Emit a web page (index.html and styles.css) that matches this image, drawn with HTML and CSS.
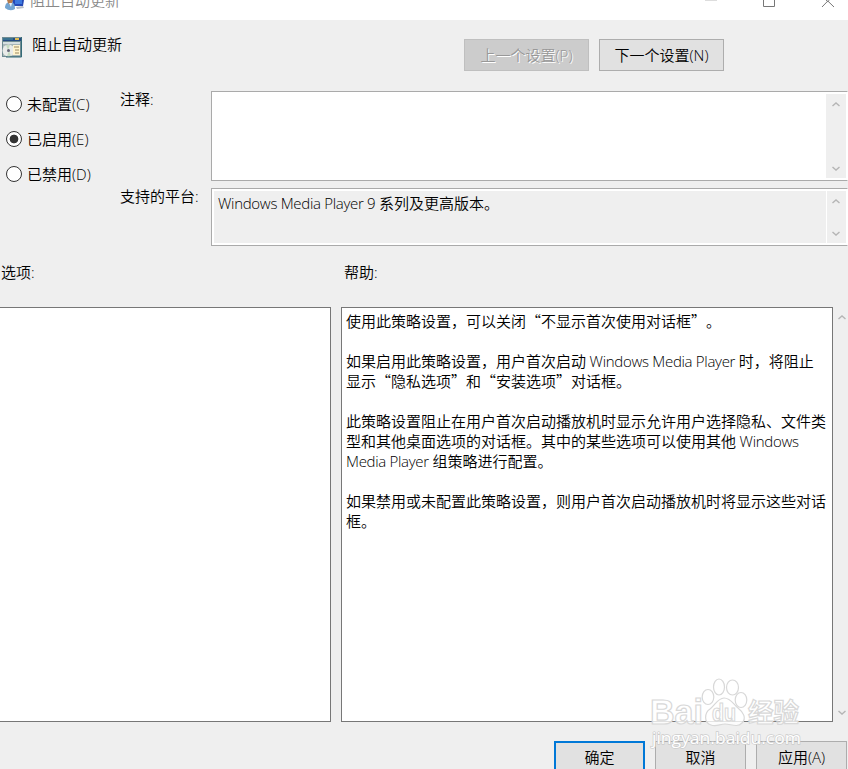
FILE: index.html
```html
<!DOCTYPE html>
<html lang="zh-CN">
<head>
<meta charset="utf-8">
<title>阻止自动更新</title>
<link rel="stylesheet" href="styles.css">
</head>
<body>
<div class="dialog">
  <header class="titlebar">
    <svg class="app-icon" width="22" height="12" viewBox="0 0 22 12">
      <path d="M8 0H20L19 6H9Z" fill="#2549b5"/><path d="M11 0H18V4H11Z" fill="#3c78df"/>
      <path d="M12 7L19 6L20 8L13 9Z" fill="#b8bec8"/>
      <path d="M1 8C1 4 3 2 6 2C10 2 11 5 11 9Q6 12 1 8Z" fill="#73a5d2"/>
      <path d="M3 0H9L8 3L6 5L4 3Z" fill="#b57b4c"/><path d="M5 3L8 3L7 7Z" fill="#e8f3fc"/>
    </svg>
    <span class="title">阻止自动更新</span>
    <svg class="controls" width="140" height="10" viewBox="0 0 140 10" fill="none" stroke="#777">
      <path d="M9 .5H21" stroke="#ddd"/><path d="M67.500 0V6.500H78.500V0"/><path d="M126 7L131.800 1L138 7M130 0L131.800 1.500L133.500 0"/>
    </svg>
  </header>

  <section class="heading">
    <svg class="policy-icon" width="21" height="21" viewBox="0 0 21 21">
      <path d="M0 0H20V20H0Z" fill="#6f8b91"/><path d="M1 1H19V4H1Z" fill="#264b83"/>
      <path d="M1 2H11" stroke="#4e9b9c"/><path d="M13 2H17" stroke="#e0bc54" stroke-width="2"/>
      <path d="M1 5H18V7H1Z" fill="#d6dfe0"/><path d="M1 7H18V19H1Z" fill="#a7b5b7"/>
      <circle cx="6.500" cy="13.500" r="6" fill="#e9ebe9"/><path d="M6 13L4 8L8 8ZM7 14L9 19L5 19Z" fill="#c5dbc2"/>
      <circle cx="6.500" cy="13.500" r="1.500" fill="#667"/>
      <path d="M11 8H18V18H11Z" fill="#fff4cf"/><path d="M12 10H17M13 13H17M13 16H17" stroke="#9b8860"/>
      <path d="M19.500 0V20H4" fill="none" stroke="#356a77"/>
    </svg>
    <h1>阻止自动更新</h1>
    <div class="nav-buttons">
      <button class="button disabled" disabled>上一个设置<span class="latin">(P)</span></button>
      <button class="button">下一个设置<span class="latin">(N)</span></button>
    </div>
  </section>

  <section class="settings">
    <div class="radios">
      <label><i class="radio"></i>未配置<span class="latin">(C)</span></label>
      <label><i class="radio checked"></i>已启用<span class="latin">(E)</span></label>
      <label><i class="radio"></i>已禁用<span class="latin">(D)</span></label>
    </div>
    <div class="field-labels"><div class="comment-label">注释<span class="latin">:</span></div><div>支持的平台<span class="latin">:</span></div></div>
    <div class="fields">
      <div class="field comment"><div class="field-text"></div><div class="scroll">
        <svg viewBox="0 0 8 5"><path d="M.5 4L4 1L7.500 4"/></svg><svg viewBox="0 0 8 5"><path d="M.5 1L4 4L7.500 1"/></svg>
      </div></div>
      <div class="field platform"><div class="field-text"><span class="latin product">Windows Media Player 9 </span>系列及更高版本。</div><div class="scroll">
        <svg viewBox="0 0 8 5"><path d="M.5 4L4 1L7.500 4"/></svg><svg viewBox="0 0 8 5"><path d="M.5 1L4 4L7.500 1"/></svg>
      </div></div>
    </div>
  </section>

  <section class="panel-labels"><div>选项<span class="latin">:</span></div><div>帮助<span class="latin">:</span></div></section>
  <main class="panels">
    <div class="panel options"></div>
    <article class="panel help">
      <p>使用此策略设置，可以关闭“不显示首次使用对话框”。</p>
      <p>如果启用此策略设置，用户首次启动<span class="latin product"> Windows Media Player </span>时，将阻止<br>显示“隐私选项”和“安装选项”对话框。</p>
      <p>此策略设置阻止在用户首次启动播放机时显示允许用户选择隐私、文件类<br>型和其他桌面选项的对话框。其中的某些选项可以使用其他<span class="latin product"> Windows</span><br><span class="latin product">Media Player </span>组策略进行配置。</p>
      <p>如果禁用或未配置此策略设置，则用户首次启动播放机时将显示这些对话<br>框。</p>
    </article>
    <div class="scroll help-scroll">
      <svg viewBox="0 0 8 5"><path d="M.5 4L4 1L7.500 4"/></svg><svg viewBox="0 0 8 5"><path d="M.5 1L4 4L7.500 1"/></svg>
    </div>
  </main>
  <footer>
    <button class="button primary">确定</button><button class="button">取消</button><button class="button">应用<span class="latin">(A)</span></button>
  </footer>

  <svg class="watermark" width="170" height="85" viewBox="0 0 170 85">
    <g fill="#fff" fill-opacity=".8" stroke="#d8d8d8" stroke-width="1.200">
      <ellipse cx="28" cy="0" rx="0" ry="0"/>
      <ellipse cx="58" cy="27" rx="5.800" ry="7.500"/><ellipse cx="69" cy="17" rx="5.500" ry="8"/>
      <ellipse cx="82.500" cy="17.500" rx="6" ry="7.500"/><ellipse cx="91" cy="30" rx="5.800" ry="7.500"/>
      <path d="M74 28C68 28 65 35 60 39C54 43 54 53 61 55C66 57 70 54 75 54C81 54 87 58 92 53C97 48 93 42 88 38C83 34 81 28 74 28Z"/>
      <text class="wm-brand" x="0" y="54" textLength="53" lengthAdjust="spacingAndGlyphs">Bai</text>
      <text class="wm-du" x="62" y="51" textLength="24" lengthAdjust="spacingAndGlyphs">du</text>
      <text class="wm-cn" x="98" y="52" textLength="51" lengthAdjust="spacingAndGlyphs">经验</text>
    </g>
    <text class="wm-url" x="2" y="74" textLength="149" lengthAdjust="spacingAndGlyphs">jingyan.baidu.com</text>
  </svg>
</div>
</body>
</html>
```
FILE: styles.css
```css
* { box-sizing: border-box; }
body { margin: 0; overflow: hidden; }
.dialog {
  position: relative;
  width: 848px;
  height: 769px;
  overflow: hidden;
  background: #efefef;
  color: #000;
  font: 15px/20px "Noto Sans CJK SC", sans-serif;
  font-weight: 350;
  text-spacing-trim: space-all;
  white-space: nowrap;
}
.latin { font-family: "Open Sans", "Noto Sans", sans-serif; }
.product { letter-spacing: -0.3px; white-space: pre; }

.titlebar { display: flex; align-items: flex-start; height: 20px; padding-left: 4px; background: #fff; overflow: hidden; }
.title { margin: -10px 0 0 4px; color: #888; }
.controls { margin-left: auto; margin-right: 10px; }
.controls { width: 140px; flex: none; margin-right: 12px; }

.heading { display: flex; align-items: flex-start; height: 71px; padding: 17px 0 0 2px; }
.heading h1 { margin: -3px 0 0 9px; font: inherit; }
.nav-buttons { display: flex; gap: 10px; margin: 2px 124px 0 auto; }
.button {
  width: 125px;
  height: 32px;
  padding: 0;
  border: 1px solid #adadad;
  background: #e1e1e1;
  color: #000;
  font: inherit;
}
.disabled { border-color: #bfbfbf; background: #ccc; color: #989898; text-shadow: 1px 1px #fff; }

.settings { display: grid; grid-template-columns: 120px 91px 637px; height: 155px; }
.radios { padding: 3px 0 0 6px; }
.radios label { display: flex; align-items: center; height: 20px; margin-bottom: 15px; }
.radio { width: 16px; height: 16px; margin-right: 5px; border: 1px solid #333; border-radius: 50%; background: #fff; }
.checked { background: radial-gradient(circle, #333 0 4px, #fff 4.700px); }
.field-labels { padding-top: -2px; }
.comment-label { height: 95px; line-height: 15px; }
.fields { display: grid; grid-template-rows: 90px 58px; row-gap: 7px; }
.field { display: flex; border: 1px solid #aaa; border-right-color: #fff; background: #fff; padding: 2px 1px 2px 2px; }
.field-text { flex: 1; padding: 1px 0 0 4px; }
.platform .field-text { background: #efefef; line-height: 21px; }
.scroll { display: flex; flex-direction: column; justify-content: space-between; align-items: center; width: 20px; padding: 8px 1px 7px 0; background: #efefef; }
.platform .scroll { border-left: 1px solid #fff; }
.scroll svg { width: 8px; height: 5px; fill: none; stroke: #b5b5b5; stroke-width: 1.400; }

.panel-labels { display: grid; grid-template-columns: 343px 1fr; height: 61px; padding: 16px 0 0 1px; }
.panels { display: grid; grid-template-columns: 331px 492px 15px; height: 415px; }
.panels { column-gap: 0; }
.panel { border: 1px solid #777; background: #fff; }
.options { border-left: 0; }
.help { margin-left: 10px; width: 492px; padding: 3px 4px; }
.help p { margin: 0 0 20px; }
.help-scroll { width: 15px; margin-left: 12px; }
footer { display: flex; gap: 10px; margin: 19px 0 0 554px; }
footer .button { width: 91px; height: 34px; padding-bottom: 2px; flex: none; }
footer .primary { border: 2px solid #0078d7; }

.watermark { position: absolute; left: 650px; top: 670px; overflow: visible; pointer-events: none; }
.wm-brand { font: 700 35px "Liberation Sans", sans-serif; }
.wm-du { font: 700 24px "Liberation Sans", sans-serif; }
.wm-cn { font: 700 26px "Noto Sans CJK SC", sans-serif; }
.wm-url { font: 17px "Open Sans", sans-serif; fill: #fff; stroke: #ccc; stroke-width: 1.400px; paint-order: stroke; }
```
